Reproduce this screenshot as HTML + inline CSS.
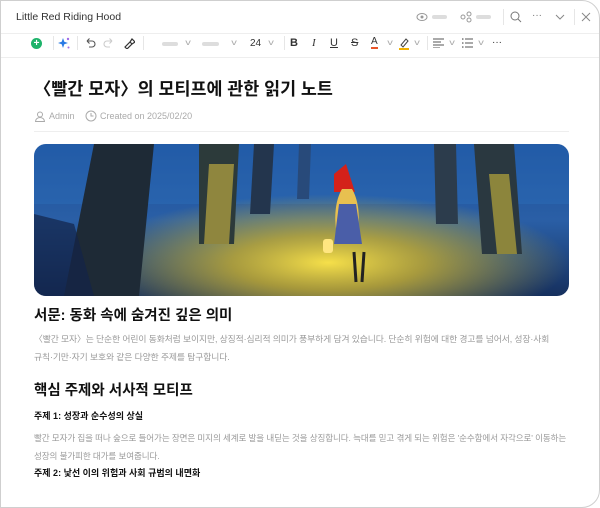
<!DOCTYPE html><html><head><meta charset="utf-8"><style>
*{margin:0;padding:0;box-sizing:border-box}
body{width:600px;height:508px;background:#fff;font-family:"Liberation Sans","Noto Sans CJK KR",sans-serif;overflow:hidden;position:relative}
.win{position:absolute;left:0;top:0;width:600px;height:508px;border:1px solid #cfcfcf;border-radius:0 18px 18px 0;overflow:hidden;background:#fff}
.a{position:absolute}
.bar{position:absolute;background:#ddd;border-radius:3px;height:4px}
.sep{position:absolute;width:1px;background:#e6e6e6}
.ch{position:absolute;font-size:8px;color:#aaa;transform:scaleX(1.4)}
.t{position:absolute;font-size:11px;color:#333;line-height:12px}
.h2{position:absolute;left:33px;font-size:14.5px;font-weight:700;color:#111;line-height:20px}
.p{position:absolute;left:33px;width:560px;font-size:8.8px;line-height:18px;color:#9a9a9a;letter-spacing:-0.1px;white-space:nowrap}
.h4{position:absolute;left:33px;font-size:9px;font-weight:700;color:#111;line-height:12px}
</style></head><body><div class="win">
<div class="a" style="left:15px;top:10px;font-size:10.5px;color:#333">Little Red Riding Hood</div>
<svg class="a" style="left:415px;top:11px" width="12" height="10"><ellipse cx="6" cy="5" rx="5" ry="3.5" fill="none" stroke="#999"/><circle cx="6" cy="5" r="1.5" fill="#999"/></svg>
<div class="bar" style="left:431px;top:14px;width:15px"></div>
<svg class="a" style="left:459px;top:10px" width="12" height="12"><circle cx="3" cy="6" r="2" fill="none" stroke="#999"/><circle cx="9" cy="3" r="2" fill="none" stroke="#999"/><circle cx="9" cy="9" r="2" fill="none" stroke="#999"/></svg>
<div class="bar" style="left:475px;top:14px;width:15px"></div>
<div class="sep" style="left:502px;top:8px;height:16px"></div>
<svg class="a" style="left:509px;top:10px" width="12" height="12"><circle cx="5" cy="5" r="4" fill="none" stroke="#777"/><path d="M8 8l3 3" stroke="#777"/></svg>
<div class="a" style="left:531px;top:9px;font-size:10px;color:#777">···</div>
<svg class="a" style="left:554px;top:12px" width="10" height="8"><path d="M1 2l4 4 4-4" fill="none" stroke="#888"/></svg>
<div class="sep" style="left:573px;top:8px;height:16px"></div>
<svg class="a" style="left:580px;top:11px" width="10" height="10"><path d="M1 1l8 8M9 1l-8 8" stroke="#888"/></svg>
<div class="a" style="left:0;top:32px;width:600px;height:1px;background:#eee"></div>
<div class="a" style="left:30px;top:37px;width:11px;height:11px;border-radius:50%;background:#1db36a;color:#fff;font-size:10px;line-height:11px;text-align:center;font-weight:700">+</div>
<div class="sep" style="left:52px;top:35px;height:14px"></div>
<svg class="a" style="left:57px;top:36px" width="12" height="12"><path d="M5 1l1.3 3.7L10 6 6.3 7.3 5 11 3.7 7.3 0 6l3.7-1.3z" fill="#2a7be4"/><circle cx="10" cy="2" r="1.2" fill="#a06be8"/><circle cx="10.5" cy="10.5" r="1" fill="#a06be8"/></svg>
<div class="sep" style="left:76px;top:35px;height:14px"></div>
<svg class="a" style="left:83px;top:36px" width="12" height="12"><path d="M3 4h5a3 3 0 010 6H5M3 4l2.5-2.5M3 4l2.5 2.5" fill="none" stroke="#555" stroke-width="1.1"/></svg>
<svg class="a" style="left:102px;top:36px" width="12" height="12"><path d="M9 4H4a3 3 0 000 6h3M9 4L6.5 1.5M9 4L6.5 6.5" fill="none" stroke="#ccc" stroke-width="1.1"/></svg>
<svg class="a" style="left:122px;top:36px" width="12" height="12"><path d="M2 10l5-5 2 2-5 5zM7 5l2-3 3 3-3 2" fill="none" stroke="#333" stroke-width="1.2"/></svg>
<div class="sep" style="left:142px;top:35px;height:14px"></div>
<div class="bar" style="left:161px;top:41px;width:16px"></div><div class="ch" style="left:185px;top:37px">v</div>
<div class="bar" style="left:201px;top:41px;width:17px"></div><div class="ch" style="left:231px;top:37px">v</div>
<div class="t" style="left:249px;top:37px;font-size:10px">24</div><div class="ch" style="left:268px;top:37px">v</div>
<div class="sep" style="left:283px;top:35px;height:14px"></div>
<div class="t" style="left:289px;top:36px;font-weight:700">B</div>
<div class="t" style="left:311px;top:36px;font-style:italic;font-family:'Liberation Serif'">I</div>
<div class="t" style="left:329px;top:36px;text-decoration:underline">U</div>
<div class="t" style="left:350px;top:36px;text-decoration:line-through">S</div>
<div class="t" style="left:370px;top:35px;font-size:10px;border-bottom:2px solid #e8552a;line-height:11px">A</div><div class="ch" style="left:387px;top:37px">v</div>
<svg class="a" style="left:397px;top:35px" width="12" height="14"><path d="M3 9l5-6 2 2-5 6z" fill="none" stroke="#444"/><rect x="1" y="12" width="10" height="2" fill="#f2b100"/></svg><div class="ch" style="left:414px;top:37px">v</div>
<div class="sep" style="left:426px;top:35px;height:14px"></div>
<svg class="a" style="left:432px;top:37px" width="11" height="10"><path d="M0 1h11M0 4h8M0 7h11M0 10h7" stroke="#555"/></svg><div class="ch" style="left:449px;top:37px">v</div>
<svg class="a" style="left:461px;top:37px" width="11" height="10"><path d="M3 1h8M3 5h8M3 9h8" stroke="#555"/><circle cx="0.8" cy="1" r=".8" fill="#555"/><circle cx="0.8" cy="5" r=".8" fill="#555"/><circle cx="0.8" cy="9" r=".8" fill="#555"/></svg><div class="ch" style="left:478px;top:37px">v</div>
<div class="a" style="left:491px;top:36px;font-size:10px;color:#333">···</div>
<div class="a" style="left:0;top:56px;width:600px;height:1px;background:#eee"></div>
<div class="a" style="left:33px;top:77px;font-size:17.4px;font-weight:700;color:#111;line-height:22px">〈빨간 모자〉의 모티프에 관한 읽기 노트</div>
<svg class="a" style="left:34px;top:110px" width="10" height="11"><circle cx="5" cy="3.5" r="2.5" fill="none" stroke="#aaa"/><path d="M0.5 10.5a4.5 4 0 019 0z" fill="none" stroke="#aaa"/></svg>
<div class="a" style="left:48px;top:110px;font-size:9px;color:#aaa">Admin</div>
<svg class="a" style="left:84px;top:109px" width="12" height="12"><circle cx="6" cy="6" r="5" fill="none" stroke="#aaa"/><path d="M6 3v3h2.5" fill="none" stroke="#aaa"/></svg>
<div class="a" style="left:99px;top:110px;font-size:9px;color:#aaa">Created on 2025/02/20</div>
<div class="a" style="left:33px;top:130px;width:535px;height:1px;background:#eee"></div>
<svg class="a" style="left:33px;top:143px;border-radius:12px" width="535" height="152" viewBox="0 0 535 152">
<defs>
<linearGradient id="bg" x1="0" y1="0" x2="0" y2="1"><stop offset="0" stop-color="#1c4f9a"/><stop offset=".5" stop-color="#2a5fa6"/><stop offset="1" stop-color="#16305e"/></linearGradient>
<radialGradient id="gl" cx=".55" cy=".78" r=".45"><stop offset="0" stop-color="#f6e04a"/><stop offset=".4" stop-color="#c9b030" stop-opacity=".8"/><stop offset="1" stop-color="#c9b030" stop-opacity="0"/></radialGradient>
</defs>
<rect width="535" height="152" fill="url(#bg)"/>
<rect x="0" y="0" width="535" height="60" fill="#2f72c0" opacity=".35"/>
<rect width="535" height="152" fill="url(#gl)"/>
<path d="M60 0h60l-15 152H30z" fill="#1e2a36"/>
<path d="M165 0h40l-5 100h-35z" fill="#2c3a3a"/><path d="M175 20h25l-5 80h-25z" fill="#b9a740" opacity=".7"/>
<path d="M220 0h20l-4 70h-20z" fill="#23354d"/>
<path d="M265 0h12l-2 55h-12z" fill="#284a7a"/>
<path d="M400 0h22l2 80h-22z" fill="#2c3c4c"/>
<path d="M440 0h40l8 110h-40z" fill="#2a3840"/><path d="M455 30h20l8 80h-20z" fill="#b6a73a" opacity=".7"/>
<path d="M0 70l40 10 20 72H0z" fill="#122448" opacity=".7"/>
<path d="M300 30l12-10 9 28h-21z" fill="#d4211a"/>
<path d="M308 45c-6 10-8 25-6 40l22 0c2-15 0-30-6-40z" fill="#e8c050"/>
<path d="M305 60l-5 40h28l-6-40z" fill="#4a5ea8"/>
<rect x="289" y="95" width="10" height="14" rx="3" fill="#ffe680"/>
<path d="M320 108l2 30M330 108l-2 30" stroke="#222" stroke-width="3"/>
</svg>
<div class="h2" style="top:305px">서문: 동화 속에 숨겨진 깊은 의미</div>
<div class="p" style="top:329px">〈빨간 모자〉는 단순한 어린이 동화처럼 보이지만, 상징적·심리적 의미가 풍부하게 담겨 있습니다. 단순히 위험에 대한 경고를 넘어서, 성장·사회<br>규칙·기만·자기 보호와 같은 다양한 주제를 탐구합니다.</div>
<div class="h2" style="top:380px">핵심 주제와 서사적 모티프</div>
<div class="h4" style="top:409px">주제 1: 성장과 순수성의 상실</div>
<div class="p" style="top:428px;font-size:8.55px">빨간 모자가 집을 떠나 숲으로 들어가는 장면은 미지의 세계로 발을 내딛는 것을 상징합니다. 늑대를 믿고 겪게 되는 위험은 '순수함에서 자각으로' 이동하는<br>성장의 불가피한 대가를 보여줍니다.</div>
<div class="h4" style="top:466px">주제 2: 낯선 이의 위험과 사회 규범의 내면화</div>
</div></body></html>
